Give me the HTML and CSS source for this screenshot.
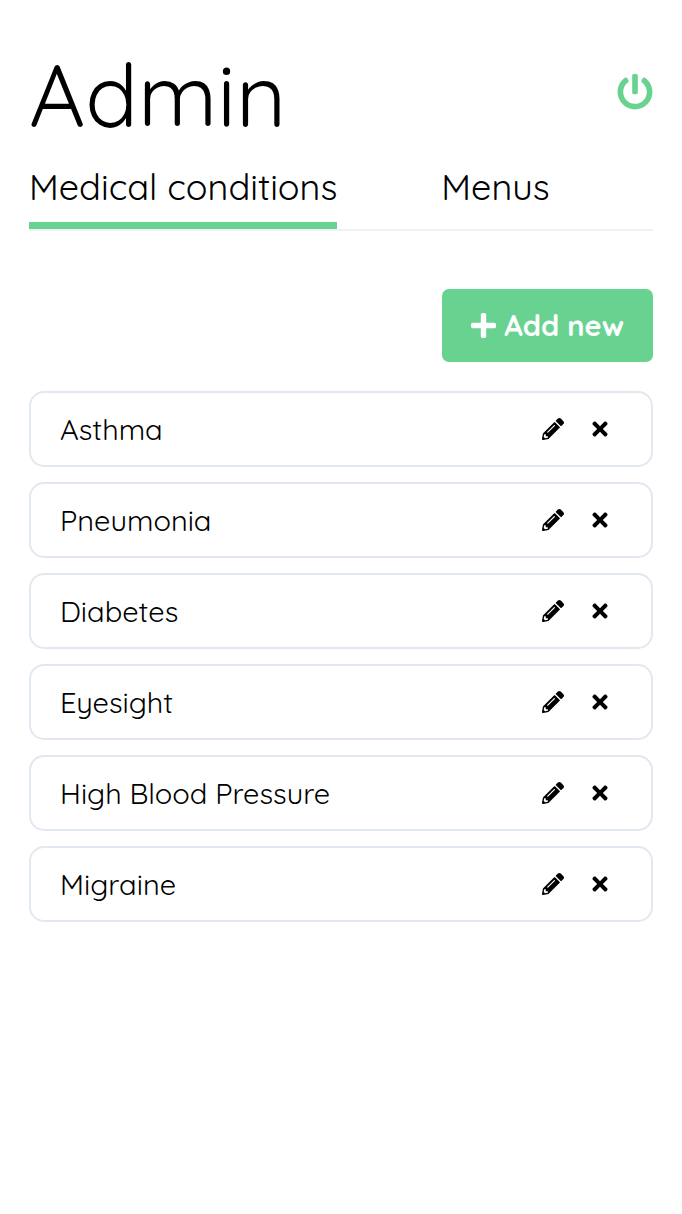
FILE: index.html
```
<!DOCTYPE html>
<html lang="en">
<head>
<meta charset="utf-8">
<meta name="viewport" content="width=device-width, initial-scale=1">
<title>Admin</title>
<link rel="stylesheet" href="styles.css">
</head>
<body>
<svg class="sprite" aria-hidden="true">
  <symbol id="power" viewBox="0 0 512 512"><path d="M400 54.1c63 45 104 118.6 104 201.9 0 136.8-110.8 247.7-247.5 248C120 504.3 8.2 393 8 256.4 7.9 173.1 48.9 99.3 111.8 54.2c11.7-8.3 28-4.8 35 7.7L162.6 90c5.9 10.5 3.1 23.8-6.6 31-41.5 30.8-68 79.6-68 134.9-.1 92.3 74.5 168.1 168 168.1 91.6 0 168.6-74.2 168-169.1-.3-51.8-24.7-101.8-68.1-134-9.7-7.2-12.4-20.5-6.5-30.9l15.8-28.1c7-12.4 23.2-16.1 34.8-7.8zM296 264V24c0-13.3-10.7-24-24-24h-32c-13.3 0-24 10.7-24 24v240c0 13.3 10.7 24 24 24h32c13.3 0 24-10.7 24-24z"/></symbol>
  <symbol id="plus" viewBox="0 0 448 512"><path d="M416 208H272V64c0-17.67-14.33-32-32-32h-32c-17.67 0-32 14.33-32 32v144H32c-17.67 0-32 14.33-32 32v32c0 17.67 14.33 32 32 32h144v144c0 17.67 14.33 32 32 32h32c17.67 0 32-14.33 32-32V304h144c17.67 0 32-14.33 32-32v-32c0-17.67-14.33-32-32-32z"/></symbol>
  <symbol id="pencil" viewBox="0 0 512 512"><path d="M497.9 142.1l-46.1 46.1c-4.7 4.7-12.3 4.7-17 0l-111-111c-4.7-4.7-4.7-12.3 0-17l46.1-46.1c18.7-18.7 49.1-18.7 67.9 0l60.1 60.1c18.8 18.7 18.8 49.1 0 67.9zM284.2 99.8L21.6 362.4.4 483.9c-2.9 16.4 11.4 30.6 27.8 27.8l121.5-21.3 262.6-262.6c4.7-4.7 4.7-12.3 0-17l-111-111c-4.8-4.7-12.4-4.7-17.1 0zM124.1 339.9c-5.5-5.5-5.5-14.3 0-19.8l154-154c5.5-5.5 14.3-5.5 19.8 0s5.5 14.3 0 19.8l-154 154c-5.5 5.5-14.3 5.5-19.8 0zM88 424h48v36.3l-64.5 11.3-31.1-31.1L51.7 376H88v48z"/></symbol>
  <symbol id="times" viewBox="0 0 352 512"><path d="M242.72 256l100.07-100.07c12.28-12.28 12.28-32.19 0-44.48l-22.24-22.24c-12.28-12.28-32.19-12.28-44.48 0L176 189.28 75.93 89.21c-12.28-12.28-32.19-12.28-44.48 0L9.21 111.45c-12.28 12.28-12.28 32.19 0 44.48L109.28 256 9.21 356.07c-12.28 12.28-12.28 32.19 0 44.48l22.24 22.24c12.28 12.28 32.2 12.28 44.48 0L176 322.72l100.07 100.07c12.28 12.28 32.2 12.28 44.48 0l22.24-22.24c12.28-12.28 12.28-32.19 0-44.48L242.72 256z"/></symbol>
</svg>
<main class="page">
  <header class="header">
    <h1 class="title">Admin</h1>
    <button class="icon-button logout" type="button" aria-label="Log out"><svg class="icon-power"><use href="#power"/></svg></button>
  </header>
  <nav class="tabs" aria-label="Admin sections">
    <a class="tab tab-active" href="#conditions" aria-current="page">Medical conditions</a>
    <a class="tab" href="#menus">Menus</a>
  </nav>
  <div class="toolbar">
    <button class="add-button" type="button"><svg class="icon-plus" aria-hidden="true"><use href="#plus"/></svg>Add new</button>
  </div>
  <ul class="list" id="conditions">
    <li class="card"><span class="name">Asthma</span><button class="icon-button" type="button" aria-label="Edit Asthma"><svg class="icon-pencil"><use href="#pencil"/></svg></button><button class="icon-button" type="button" aria-label="Delete Asthma"><svg class="icon-times"><use href="#times"/></svg></button></li>
    <li class="card"><span class="name">Pneumonia</span><button class="icon-button" type="button" aria-label="Edit Pneumonia"><svg class="icon-pencil"><use href="#pencil"/></svg></button><button class="icon-button" type="button" aria-label="Delete Pneumonia"><svg class="icon-times"><use href="#times"/></svg></button></li>
    <li class="card"><span class="name">Diabetes</span><button class="icon-button" type="button" aria-label="Edit Diabetes"><svg class="icon-pencil"><use href="#pencil"/></svg></button><button class="icon-button" type="button" aria-label="Delete Diabetes"><svg class="icon-times"><use href="#times"/></svg></button></li>
    <li class="card"><span class="name">Eyesight</span><button class="icon-button" type="button" aria-label="Edit Eyesight"><svg class="icon-pencil"><use href="#pencil"/></svg></button><button class="icon-button" type="button" aria-label="Delete Eyesight"><svg class="icon-times"><use href="#times"/></svg></button></li>
    <li class="card"><span class="name">High Blood Pressure</span><button class="icon-button" type="button" aria-label="Edit High Blood Pressure"><svg class="icon-pencil"><use href="#pencil"/></svg></button><button class="icon-button" type="button" aria-label="Delete High Blood Pressure"><svg class="icon-times"><use href="#times"/></svg></button></li>
    <li class="card"><span class="name">Migraine</span><button class="icon-button" type="button" aria-label="Edit Migraine"><svg class="icon-pencil"><use href="#pencil"/></svg></button><button class="icon-button" type="button" aria-label="Delete Migraine"><svg class="icon-times"><use href="#times"/></svg></button></li>
  </ul>
</main>
</body>
</html>
```
FILE: styles.css
```
* { box-sizing: border-box; }
body {
  margin: 0;
  background: #fff;
  color: #000;
  font-family: Quicksand, Lato, sans-serif;
  font-size: 29px;
}
svg { display: block; fill: currentColor; }
.sprite { display: none; }
.page { padding: 40px 29px; }
.header {
  display: flex;
  align-items: center;
  justify-content: space-between;
}
.title {
  margin: 0;
  font-size: 87px;
  line-height: 110px;
  font-weight: 400;
}
.icon-button {
  padding: 0;
  border: 0;
  background: none;
  color: inherit;
  cursor: pointer;
}
.logout { color: #68d391; padding-bottom: 6px; }
.icon-power { width: 36px; height: 36px; }
.tabs {
  display: flex;
  gap: 104px;
  margin-top: 13px;
  border-bottom: 2px solid #edf2f7;
}
.tab {
  padding-bottom: 11px;
  border-bottom: 7px solid transparent;
  color: inherit;
  font-size: 36px;
  line-height: 48px;
  text-decoration: none;
  white-space: nowrap;
}
.tab-active { border-bottom-color: #68d391; }
.toolbar {
  display: flex;
  justify-content: flex-end;
  margin: 58px 0 29px;
}
.add-button {
  display: flex;
  align-items: center;
  gap: 8px;
  padding: 0 29px;
  border: 0;
  border-radius: 7px;
  background: #68d391;
  color: #fff;
  font: inherit;
  font-weight: 700;
  line-height: 73px;
  cursor: pointer;
}
.icon-plus { width: 25px; height: 29px; }
.list {
  display: grid;
  gap: 15px;
  margin: 0;
  padding: 0;
  list-style: none;
}
.card {
  display: flex;
  align-items: center;
  gap: 28px;
  padding: 18px 43px 18px 29px;
  border: 2px solid #e2e8f0;
  border-radius: 15px;
  line-height: 36px;
}
.name { flex: 1; }
.icon-pencil { width: 22px; height: 22px; }
.icon-times { width: 16px; height: 22px; }
```
